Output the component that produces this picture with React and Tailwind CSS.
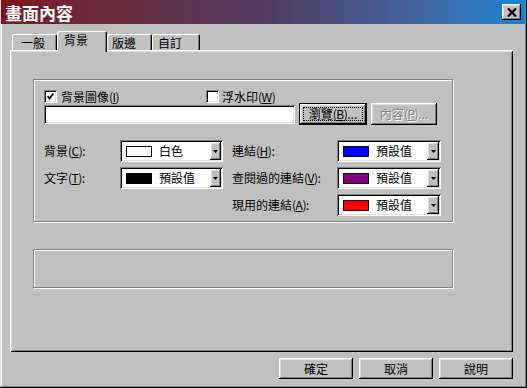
import React from 'react';

const raised = 'shadow-[inset_-1px_-1px_#000,inset_1px_1px_#fff,inset_-2px_-2px_#808080,inset_2px_2px_#dfdfdf]';
const sunken = 'shadow-[inset_1px_1px_#808080,inset_-1px_-1px_#fff,inset_2px_2px_#000,inset_-2px_-2px_#dfdfdf]';

function Mn({ k }) {
  return <span className="tracking-[-0.5px]">(<u>{k}</u>)</span>;
}

function CheckBox({ checked }) {
  return (
    <div className={`w-[13px] h-[13px] bg-white ${sunken} flex items-center justify-center shrink-0`}>
      {checked && (
        <svg width="7" height="7" viewBox="0 0 7 7">
          <path d="M0.5 3 L2.5 5.5 L6.5 0.5" fill="none" stroke="#000" strokeWidth="1.8" />
        </svg>
      )}
    </div>
  );
}

function Combo({ width, swatch, label, btnW = 'w-[12px]' }) {
  return (
    <div className={`${width} h-[22px] bg-white ${sunken} flex items-center pl-[6px] pr-[2px] shrink-0`}>
      <div className={`w-[26px] h-[11px] border border-black ${swatch}`} />
      <span className="ml-[7px] flex-1 leading-none">{label}</span>
      <div className={`${btnW} h-[18px] bg-[#c0c0c0] ${raised} flex items-center justify-center`}>
        <svg width="5" height="3" viewBox="0 0 5 3">
          <path d="M0 0 H5 L2.5 3 Z" fill="#000" />
        </svg>
      </div>
    </div>
  );
}

function Tab({ label, selected, w, pl }) {
  if (selected) {
    return (
      <div className={`relative z-10 ${w} h-[21px] -mb-[2px] bg-[#c0c0c0] rounded-t-[2px] shadow-[inset_1px_1px_#fff,inset_-1px_0_#000,inset_-2px_0_#808080] ${pl} pt-[3px] leading-none`}>
        {label}
      </div>
    );
  }
  return (
    <div className={`${w} h-[16px] rounded-t-[2px] shadow-[inset_1px_1px_#fff,inset_-1px_0_#000,inset_-2px_0_#808080] ${pl} pt-[3px] leading-none`}>
      {label}
    </div>
  );
}

function Button({ children, w = 'w-[74px]', h = 'h-[21px]' }) {
  return (
    <div className={`${w} ${h} bg-[#c0c0c0] ${raised} flex items-center justify-center leading-none`}>
      {children}
    </div>
  );
}

export default function App() {
  return (
    <div className="w-[527px] h-[388px] bg-[#c0c0c0] flex flex-col pl-[1px] pr-[2px] pb-[2px] text-[12px] text-black font-['Noto_Sans_CJK_TC',sans-serif] shadow-[inset_-1px_-1px_#000,inset_1px_0_#dfdfdf,inset_-2px_-2px_#808080,inset_2px_0_#fff] overflow-hidden">
      {/* title bar */}
      <div className="h-[24px] bg-linear-to-r from-[#7a161c] via-[#4e3a5e] to-[#1084d0] flex items-center justify-between pl-[4px] pr-[4px]">
        <span className="text-white font-bold text-[17px] leading-none">畫面內容</span>
        <div className={`w-[19px] h-[16px] bg-[#c0c0c0] ${raised} flex items-center justify-center`}>
          <svg width="10" height="9" viewBox="0 0 10 9">
            <path d="M1 0.5 L9 8.5 M9 0.5 L1 8.5" stroke="#000" strokeWidth="2.2" />
          </svg>
        </div>
      </div>

      {/* tabs */}
      <div className="mt-[7px] pl-[11px] flex items-end">
        <Tab label="一般" w="w-[45px]" pl="pl-[9px]" />
        <Tab label="背景" w="w-[50px]" pl="pl-[7px]" selected />
        <Tab label="版邊" w="w-[45px]" pl="pl-[5px]" />
        <Tab label="自訂" w="w-[48px]" pl="pl-[6px]" />
      </div>

      {/* panel */}
      <div className="ml-[9px] w-[503px] h-[302px] shadow-[inset_1px_1px_#fff,inset_-1px_-1px_#000,inset_2px_2px_#dfdfdf,inset_-2px_-2px_#808080] pt-[29px] pl-[23px]">
        <div className="w-[420px] h-[143px] border border-[#808080] shadow-[1px_1px_0_#fff,inset_1px_1px_0_#fff] pl-[10px] pt-[10px]">
          <div className="h-[13px] flex items-center">
            <div className="w-[162px] flex items-center">
              <CheckBox checked />
              <span className="ml-[4px] leading-none">背景圖像<Mn k="I" /></span>
            </div>
            <CheckBox />
            <span className="ml-[3px] leading-none">浮水印<Mn k="W" /></span>
          </div>

          <div className="h-[22px] flex items-center">
            <div className={`w-[251px] h-[19px] bg-white ${sunken}`} />
            <div className="ml-[4px] w-[68px] h-[22px] border border-black">
              <div className={`w-full h-full ${raised} p-[3px]`}>
                <div className="w-full h-full border border-dotted border-black flex items-center justify-center leading-none">
                  瀏覽<Mn k="B" />...
                </div>
              </div>
            </div>
            <div className="ml-[4px]">
              <Button w="w-[66px]" h="h-[22px]">
                <span className="text-[#808080] [text-shadow:1px_1px_0_#fff]">內容<Mn k="P" />...</span>
              </Button>
            </div>
          </div>

          <div className="mt-[15px] flex flex-col gap-[5px]">
            <div className="flex items-center">
              <span className="w-[76px] leading-none">背景<Mn k="C" />:</span>
              <Combo width="w-[103px]" swatch="bg-white" label="白色" btnW="w-[11px]" />
              <span className="ml-[9px] w-[105px] leading-none">連結<Mn k="H" />:</span>
              <Combo width="w-[104px]" swatch="bg-[#0000ff]" label="預設值" />
            </div>
            <div className="flex items-center">
              <span className="w-[76px] leading-none">文字<Mn k="T" />:</span>
              <Combo width="w-[103px]" swatch="bg-black" label="預設值" btnW="w-[11px]" />
              <span className="ml-[9px] w-[105px] leading-none">查閱過的連結<Mn k="V" />:</span>
              <Combo width="w-[104px]" swatch="bg-[#800080]" label="預設值" />
            </div>
            <div className="flex items-center">
              <div className="w-[179px]" />
              <span className="ml-[9px] w-[105px] leading-none">現用的連結<Mn k="A" />:</span>
              <Combo width="w-[104px]" swatch="bg-[#ff0000]" label="預設值" />
            </div>
          </div>
        </div>

        <div className="mt-[27px] w-[420px] h-[39px] border border-[#808080] shadow-[1px_1px_0_#fff,inset_1px_1px_0_#fff]" />
      </div>

      {/* buttons */}
      <div className="ml-[9px] w-[503px] mt-[6px] flex justify-end gap-[6px]">
        <Button>確定</Button>
        <Button>取消</Button>
        <Button>說明</Button>
      </div>
    </div>
  );
}
